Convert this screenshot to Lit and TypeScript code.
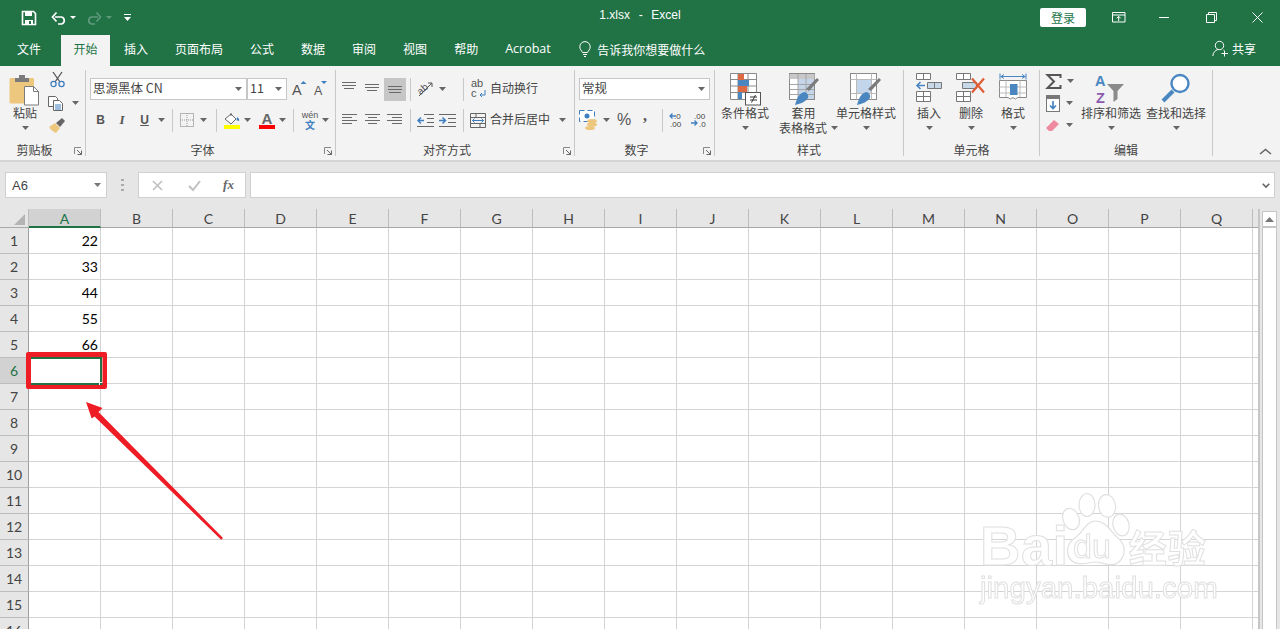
import { LitElement, html, css, svg, TemplateResult } from "lit";
import { customElement } from "lit/decorators.js";

const ic = (w: number, h: number, body: unknown) =>
  html`<svg class="ic" width=${w} height=${h} viewBox="0 0 ${w} ${h}">${body}</svg>`;
const caret = (c = "#666") => ic(7, 4, svg`<path d="M0 0h7L3.5 4z" fill=${c}/>`);
const lines = (rows: number[][], color = "#6a6a6a") =>
  ic(18, 16, svg`<path d=${rows.map(([a, b, y]) => `M${a} ${y}.5H${b}`).join("")} stroke=${color} fill="none"/>`);

const icons: Record<string, TemplateResult> = {
  save: ic(16, 16, svg`<path d="M1.5 1.5h11l2 2v11h-13z" fill="none" stroke="#fff" stroke-width="1.6"/><path d="M4 2h7v4H4zM4 10h8v5H4z" fill="#fff"/><path d="M8 11h2v3H8z" fill="#217346"/>`),
  undo: ic(16, 14, svg`<path d="M4 6h6.5a3.6 3.6 0 0 1 0 7H7" fill="none" stroke="#fff" stroke-width="1.7"/><path d="M5.5 1.5L1.5 6l4 4.5" fill="none" stroke="#fff" stroke-width="1.7"/>`),
  redo: ic(16, 14, svg`<path d="M12 6H5.5a3.6 3.6 0 0 0 0 7H9" fill="none" stroke="#5f9a7d" stroke-width="1.7"/><path d="M10.5 1.5l4 4.5-4 4.5" fill="none" stroke="#5f9a7d" stroke-width="1.7"/>`),
  custom: ic(7, 7, svg`<path d="M0 0h7v1H0zM0 3h7L3.5 7z" fill="#fff"/>`),
  display: ic(14, 11, svg`<path d="M.5.5h12.5v9.5H.5zM.5 3h12.5" fill="none" stroke="#fff"/><path d="M6.7 9V4.5M4.7 6.3l2-2 2 2" fill="none" stroke="#fff"/>`),
  min: ic(11, 11, svg`<path d="M0 5.5h10" stroke="#fff"/>`),
  restore: ic(11, 11, svg`<path d="M.5 2.5h8v8h-8zM2.5 2.5v-2h8v8h-2" fill="none" stroke="#fff"/>`),
  close: ic(11, 11, svg`<path d="M.5.5l10 10M10.5.5l-10 10" stroke="#fff"/>`),
  bulb: ic(12, 16, svg`<path d="M3.5 11.5C2.5 9.5.8 8.4.8 5.8a5.2 5.2 0 0 1 10.4 0c0 2.6-1.7 3.7-2.7 5.7zM4 13.5h4M5 15.5h2" fill="none" stroke="#fff"/>`),
  share: ic(17, 17, svg`<circle cx="7.5" cy="5.5" r="4.2" fill="none" stroke="#fff"/><path d="M.8 16c.3-3.5 2.5-5.8 5-6.4M11 9.8l.6.3" fill="none" stroke="#fff"/><path d="M12.5 10.5v6M9.5 13.5h6.500" stroke="#fff"/>`),
  paste: ic(30, 32, svg`<path d="M1.500 4h21.500a1.500 1.500 0 0 1 1 1.500v24h-23a1.500 1.500 0 0 1-1.500-1.500V5.500A1.500 1.500 0 0 1 1.500 4z" fill="#eec77f"/><path d="M5 4h14v4H5zM9 1h6v3H9z" fill="#7b7b7b"/><path d="M14.500 12.500h9l5 5v13.500h-14z" fill="#fff" stroke="#7b7b7b"/><path d="M23.500 12.500v5h5" fill="none" stroke="#7b7b7b"/>`),
  cut: ic(15, 17, svg`<path d="M3 1l7 10M12 1L5 11" stroke="#555" stroke-width="1.300" fill="none"/><circle cx="3.500" cy="13" r="2.600" fill="none" stroke="#3f7fc0" stroke-width="1.300"/><circle cx="11.500" cy="13" r="2.600" fill="none" stroke="#3f7fc0" stroke-width="1.300"/>`),
  copy: ic(16, 15, svg`<path d="M.5.5h7l2 2v8h-9z" fill="#fff" stroke="#666"/><path d="M5.500 4.500h6l3 3v7h-9z" fill="#fff" stroke="#666"/><path d="M7 9h6M7 11h6M7 13h6" stroke="#3f7fc0"/>`),
  painter: ic(16, 15, svg`<path d="M0 9l6-4 5 5-4 5c-2-.4-5-3-7-6z" fill="#eec77f"/><path d="M7 5l6-5 3 3-5 6z" fill="#666"/>`),
  B: html`<span class="fs b">B</span>`,
  I: html`<span class="fs i">I</span>`,
  U: html`<span class="fs u">U</span>`,
  border: ic(14, 14, svg`<rect x=".5" y=".5" width="13" height="13" fill="none" stroke="#777" stroke-dasharray="1 1"/><path d="M7 0v14M0 7h14" stroke="#999" stroke-dasharray="1 1"/>`),
  fill: ic(18, 18, svg`<path d="M2 8l6-5 5 5-5 5z" fill="#fff" stroke="#666"/><path d="M8 2v3" stroke="#666"/><path d="M14 6c2 1 2.500 3 2 4l-2.500-.8z" fill="#3f7fc0"/><rect x="1" y="14" width="16" height="4" fill="#ffff00"/>`),
  color: ic(16, 18, svg`<text x="8" y="12.500" text-anchor="middle" font-family="Liberation Sans" font-size="15" font-weight="700" fill="#666">A</text><rect y="14" width="16" height="4" fill="#f00"/>`),
  wen: html`<span class="wen"><span>wén</span><b>文</b></span>`,
  grow: ic(20, 18, svg`<text x="3" y="15" font-family="Liberation Sans" font-size="14.500" fill="#555">A</text><path d="M11.500 4h6l-3-3z" fill="#3f7fc0"/>`),
  shrink: ic(16, 18, svg`<text x="1" y="15" font-family="Liberation Sans" font-size="12.500" fill="#555">A</text><path d="M8 1h6l-3 3z" fill="#3f7fc0"/>`),
  aTop: lines([[0, 14, 1], [0, 14, 4], [2, 12, 7]]),
  aMid: lines([[1, 15, 3], [1, 15, 6], [3, 13, 9]]),
  aBot: lines([[2, 16, 5], [2, 16, 8], [3, 15, 11]]),
  orient: ic(20, 18, svg`<text transform="rotate(-42 8 9)" x="2" y="12" font-family="Liberation Sans" font-size="10" fill="#555">ab</text><path d="M4 16L17 3M13 3h4v4" stroke="#555" fill="none"/>`),
  wrap: ic(15, 22, svg`<text x="0" y="9" font-family="Liberation Sans" font-size="11" fill="#555">ab</text><text x="0" y="19" font-family="Liberation Sans" font-size="11" fill="#555">c</text><path d="M14 12v5H9M11 15l-2 2 2 2" stroke="#3f7fc0" fill="none"/>`),
  left: lines([[0, 15, 2], [0, 10, 5], [0, 15, 8], [0, 10, 11]]),
  center: lines([[1, 16, 2], [4, 13, 5], [1, 16, 8], [4, 13, 11]]),
  right: lines([[1, 16, 2], [6, 16, 5], [1, 16, 8], [6, 16, 11]]),
  indentL: ic(17, 13, svg`<path d="M7 .5h10M10 4.500h7M10 8.500h7M0 12.500h17" stroke="#666"/><path d="M7 6.500H1M4 3.500l-3 3 3 3" stroke="#3f7fc0" stroke-width="1.500" fill="none"/>`),
  indentR: ic(17, 13, svg`<path d="M0 .5h17M9 4.500h8M9 8.500h8M0 12.500h17" stroke="#666"/><path d="M0 6.500h6M3.500 3.500l3 3-3 3" stroke="#3f7fc0" stroke-width="1.500" fill="none"/>`),
  merge: ic(16, 15, svg`<path d="M.5.5h15v14H.5zM.5 4.500h15M.5 10.500h15M6 .5v4M10 10.500v4" fill="none" stroke="#666"/><path d="M2.500 7.500h11" stroke="#3f7fc0"/><path d="M4.500 5.500l-2 2 2 2M11.500 5.500l2 2-2 2" stroke="#3f7fc0" fill="none"/>`),
  currency: ic(20, 20, svg`<rect x=".5" y=".5" width="15" height="11" fill="#fff" stroke="#3f7fc0" stroke-dasharray="5 3"/><circle cx="8" cy="6" r="2.500" fill="#3f7fc0"/><ellipse cx="13" cy="11" rx="5" ry="2" fill="#eec77f"/><ellipse cx="13" cy="14.500" rx="5" ry="2" fill="#eec77f"/><ellipse cx="11" cy="18" rx="5" ry="2" fill="#eec77f"/>`),
  pct: html`<span class="pct">%</span>`,
  comma: html`<span class="comma">,</span>`,
  decL: ic(16, 16, svg`<text x="5" y="7" font-family="Liberation Sans" font-size="8" fill="#444">.0</text><text x="1" y="14.500" font-family="Liberation Sans" font-size="8" fill="#444">.00</text><path d="M7 4H1M3.500 1.500L1 4l2.500 2.500" stroke="#3f7fc0" stroke-width="1.300" fill="none"/>`),
  decR: ic(16, 16, svg`<text x="4" y="7" font-family="Liberation Sans" font-size="8" fill="#444">.00</text><text x="9" y="14.500" font-family="Liberation Sans" font-size="8" fill="#444">.0</text><path d="M1 11h6M4.500 8.500L7 11l-2.500 2.500" stroke="#3f7fc0" stroke-width="1.300" fill="none"/>`),
  cond: ic(31, 33, svg`<path d="M.5.5h26v26H.5zM.5 6.500h26M.5 13h26M.5 19.500h26M8 .5v26M18 .5v26" fill="#fff" stroke="#8a8a8a"/><path d="M8 1h6v6H8z" fill="#de6a43"/><path d="M8 7h11v6H8z" fill="#4a86c0"/><path d="M8 13h9v6H8z" fill="#de6a43"/><path d="M8 19h4v7H8z" fill="#4a86c0"/><rect x="15.500" y="19.500" width="15" height="12.500" fill="#fff" stroke="#555"/><path d="M20 24h7M20 27h7M25.500 22l-4 7.500" stroke="#333" fill="none"/>`),
  table: ic(30, 33, svg`<rect x=".5" y=".5" width="25" height="26" fill="#fff" stroke="#8a8a8a"/><path d="M.5 1h25v5H.5z" fill="#c8c8c8"/><path d="M9 6h16v20H9z" fill="#c5d6ea"/><path d="M1 11.500h24M1 16.500h24M1 21.500h24M9 1v25M17 1v25" stroke="#a5a5a5"/><path d="M17 16L28 5l2 2-10 11z" fill="#7b7b7b"/><path d="M6 32c2-6 3-11 9-13 3 .5 5 3 4 6-3 4-8 6-13 7z" fill="#4a86c0"/>`),
  cellStyle: ic(32, 33, svg`<rect x=".5" y=".5" width="26" height="26" fill="#fff" stroke="#8a8a8a"/><path d="M.5 6.500h26M.5 20.500h26M6.500.5v26M21.500.5v26" stroke="#bbb"/><path d="M7 7h14v13H7z" fill="#c2d5ea"/><path d="M18 16L29 5l2 2-10 11z" fill="#7b7b7b"/><path d="M7 32c2-6 3-11 9-13 3 .5 5 3 4 6-3 4-8 6-13 7z" fill="#4a86c0"/>`),
  insert: ic(26, 30, svg`<path d="M.5.5h14v6H.5zM7.500.5v6M.5 18.500h14v10H.5zM.5 23.500h14M7.500 18.500v10" fill="#fff" stroke="#777"/><path d="M11.500 9.500h14v6h-14zM18.500 9.500v6" fill="#c8d8e8" stroke="#777"/><path d="M9 12.500H1M4.500 9L1 12.500 4.500 16" stroke="#4a86c0" stroke-width="1.600" fill="none"/>`),
  del: ic(30, 30, svg`<path d="M.5.5h14v6H.5zM7.500.5v6M.5 18.500h14v10H.5zM.5 23.500h14M7.500 18.500v10" fill="#fff" stroke="#777"/><path d="M6.500 9.500h14v6h-14z" fill="#c8d8e8" stroke="#777"/><path d="M16 5.500l12 14M28 5.500l-12 14" stroke="#de5c36" stroke-width="2.200" fill="none"/>`),
  format: ic(28, 32, svg`<path d="M1 .5v6M27 .5v6M1.500 3.500h25M5 1.500l-3 2 3 2M23 1.500l3 2-3 2" stroke="#4a86c0" fill="none"/><path d="M.5 7.500h27v17h-9q-2 3-4.500 0-3 3-5 0H.5z" fill="#fff" stroke="#8a8a8a"/><path d="M.5 14h27M.5 20h27M7 7.500V24M21 7.500V24" stroke="#bbb"/><path d="M11 11h7.500v11H11z" fill="#4a86c0"/>`),
  sigma: ic(15, 15, svg`<path d="M14.500 4V1H1.500l6.500 6.500L1.500 14H14.500V11" fill="none" stroke="#555" stroke-width="2"/>`),
  down: ic(14, 17, svg`<rect x=".5" y=".5" width="13" height="16" fill="#fff" stroke="#777"/><path d="M1 1h12v3H1z" fill="#777"/><path d="M7 6v8M4 10.500l3 3 3-3" stroke="#3f7fc0" stroke-width="1.600" fill="none"/>`),
  eraser: ic(14, 13, svg`<path d="M0 9l8-8 5 4-7 7H3z" fill="#ee8aa0"/>`),
  sort: ic(32, 30, svg`<text x="0" y="12" font-family="Liberation Sans" font-weight="700" font-size="14.500" fill="#4a86c0">A</text><text x="1" y="29" font-family="Liberation Sans" font-weight="700" font-size="14.500" fill="#8a5bb0">Z</text><path d="M12 10h17l-6.500 7v8l-4 3V17z" fill="#8a8a8a"/>`),
  find: ic(30, 30, svg`<circle cx="19" cy="10.500" r="8.500" fill="#fff" stroke="#4a86c0" stroke-width="2.400"/><path d="M12 18L2 28" stroke="#4a86c0" stroke-width="4"/>`),
};

const launcher = ic(8, 8, svg`<path d="M.5 7V.5H7" fill="none" stroke="#888"/><path d="M3 3l4.500 4.500M7.500 3.500v4h-4" fill="none" stroke="#666"/>`);

const S = (w: number, c: unknown = "") => html`<span class="s" style="width:${w}px">${c}</span>`;
const sep = (w: number) => html`<span class="s" style="width:${w}px"><i class="vs"></i></span>`;
const big = (w: number, icon: TemplateResult, lines: unknown[], top = 0) => html`
  <div class="big" style="width:${w}px">
    <div class="bi" style="padding-top:${top}px">${icon}</div>
    ${lines.map((l) => html`<div class="bl">${l}</div>`)}
  </div>`;
const group = (w: number, label: string, body: unknown, launch = false) => html`
  <section class="grp" style="width:${w}px">
    <div class="body">${body}</div>
    <div class="lab"><span></span><span class=${launch ? "shift" : ""}>${label}</span>${launch ? html`<span class="ln">${launcher}</span>` : html`<span></span>`}</div>
  </section>`;

const COLS = "ABCDEFGHIJKLMNOPQ".split("");
const VALUES: Record<number, number> = { 1: 22, 2: 33, 3: 44, 4: 55, 5: 66 };
const TABS = ["文件", "开始", "插入", "页面布局", "公式", "数据", "审阅", "视图", "帮助", "Acrobat"];

@customElement("app-root")
export class AppRoot extends LitElement {
  static styles = css`
    :host { display: block; width: 1280px; height: 629px; overflow: hidden; position: relative; background: #fff;
      font-family: "Noto Sans CJK SC", "Noto Sans", sans-serif; font-size: 12px; color: #444; }
    .ic { display: block; flex: none; overflow: visible; }
    .s { display: flex; align-items: center; justify-content: center; flex: none; height: 100%; }
    .title { height: 35px; background: #217346; display: flex; align-items: center; color: #fff; position: relative; }
    .qat { display: flex; align-items: center; height: 100%; padding-left: 21px; }
    .doc { position: absolute; left: 0; right: 0; top: 6px; line-height: 18px; text-align: center; font-family: "Liberation Sans", sans-serif; font-size: 12px; white-space: pre; word-spacing: 1px; }
    .win { margin-left: auto; display: flex; align-items: center; height: 100%; }
    .login { width: 46px; height: 19px; background: #fff; color: #217346; border-radius: 2px; text-align: center; line-height: 19px; margin-right: 10px; font-size: 12px; }
    .tabs { height: 31px; background: #217346; display: flex; color: #fff; padding-left: 4.5px; }
    .tab { padding: 0 12.5px; margin-right: 2px; line-height: 27px; white-space: nowrap; }
    .tab.first { margin-right: 7.5px; }
    .tab.on { background: #f3f3f3; color: #217346; margin-right: 1.5px; }
    .tab.ac { font-family: "Open Sans", sans-serif; font-size: 12.5px; }
    .tell { display: flex; align-items: center; gap: 6px; margin-left: 14px; font-size: 12px; height: 28px; white-space: nowrap; }
    .share { margin-left: auto; display: flex; align-items: center; gap: 3px; padding-right: 24px; height: 27px; }
    .ribbon { height: 96px; box-sizing: border-box; background: #f3f3f3; border-bottom: 2px solid #d5d5d5; display: flex; padding-top: 4px; position: relative; }
    .grp { height: 86px; box-sizing: border-box; border-right: 1px solid #c8c8c8; display: flex; flex-direction: column; flex: none; }
    .body { height: 74px; display: flex; box-sizing: border-box; }
    .lab { height: 12px; line-height: 12px; display: grid; grid-template-columns: 1fr auto 1fr; color: #444; white-space: nowrap; }
    .shift { margin-right: 16px; }
    .ln { justify-self: end; padding: 3px 3px 0 0; }
    .col2 { display: flex; flex-direction: column; gap: 7px; padding-top: 7px; }
    .row { display: flex; height: 24px; align-items: center; white-space: nowrap; }
    .txt { padding-bottom: 2px; line-height: 18px; }
    .vs { display: block; width: 1px; height: 23px; background: #c8c8c8; }
    .combo { height: 22px; box-sizing: border-box; background: #fff; border: 1px solid #c6c6c6; display: flex; align-items: center; justify-content: space-between; padding: 0 4px 0 2px; flex: none; line-height: 18px; }
    .combo span { padding-bottom: 2px; }
    .big { display: flex; flex-direction: column; align-items: center; flex: none; padding-top: 3px; }
    .bi { height: 32px; box-sizing: border-box; }
    .bl { height: 15px; line-height: 15px; display: flex; align-items: center; gap: 4px; white-space: nowrap; }
    .stack { width: 39px; flex: none; box-sizing: border-box; }
    .stack .row { height: 22px; justify-content: flex-start; padding-left: 6px; gap: 6px; }
    .stack .r-cut { height: 18px; padding-left: 6px; }
    .stack .r-copy { margin-top: 4px; padding-left: 4px; gap: 8px; }
    .stack .r-paint { padding-left: 5px; }
    .fs { font: 700 12px "Liberation Serif", serif; color: #555; }
    .b { font-family: "Liberation Sans", sans-serif; font-size: 12px; }
    .i { font-style: italic; font-size: 13px; }
    .u { font-family: "Liberation Sans", sans-serif; text-decoration: underline; }
    .wen { display: flex; flex-direction: column; align-items: center; font: 9px/9px "Liberation Sans", sans-serif; color: #555; }
    .wen b { color: #3f7fc0; font: 700 10px/10px "Noto Sans CJK SC", sans-serif; }
    .pct { font: 16px "Liberation Sans", sans-serif; color: #555; }
    .comma { font: 700 16px/16px "Liberation Serif", serif; color: #555; margin-top: -8px; }
    .on-bg { background: #c6c6c6; height: 23px; }
    .fontname { font-size: 12.5px; }
    .fx { height: 47px; background: #e6e6e6; display: flex; align-items: flex-start; padding: 10px 0 0 5px; box-sizing: border-box; }
    .box { height: 26px; box-sizing: border-box; background: #fff; border: 1px solid #d0d0d0; display: flex; align-items: center; flex: none; }
    .name { width: 102px; padding: 0 5px 0 6px; justify-content: space-between; font: 13px "Liberation Sans", sans-serif; color: #444; }
    .dots { width: 31px; display: flex; justify-content: center; height: 26px; align-items: center; }
    .fxbtn { width: 108px; }
    .input { width: 1025px; margin-left: 4px; justify-content: flex-end; padding-right: 4px; }
    .sheetwrap { display: flex; height: 420px; overflow: hidden; background: #e6e6e6; }
    .sheet { display: grid; grid-template-columns: 29px repeat(17, 72px) 5px; grid-template-rows: 19px repeat(16, 26px); width: 1260px; box-sizing: border-box; border-right: 2px solid #c6c6c6; font-family: Lato, sans-serif; font-size: 14px; color: #000; background: #fff; flex: none; }
    .ch { background: #e6e6e6; border-right: 1px solid #bdbdbd; border-bottom: 1px solid #a8a8a8; text-align: center; line-height: 20px; font-size: 14px; color: #444; box-sizing: border-box; }
    .ch.on { background: #d2d2d2; border-bottom: 2px solid #217346; color: #217346; }
    .ch.end { border-right: 0; }
    .corner { background: #e6e6e6; border-right: 1px solid #bdbdbd; border-bottom: 1px solid #a8a8a8; box-sizing: border-box; display: flex; justify-content: flex-end; align-items: flex-end; padding: 0 3px 2px 0; }
    .rh { background: #e6e6e6; border-right: 1px solid #9f9f9f; border-bottom: 1px solid #bdbdbd; text-align: center; line-height: 25px; font-size: 14px; color: #444; box-sizing: border-box; }
    .rh.on { background: #d2d2d2; color: #217346; }
    .c { border-right: 1px solid #d4d4d4; border-bottom: 1px solid #d4d4d4; box-sizing: border-box; text-align: right; padding-right: 2px; line-height: 25px; }
    .c.end { border-right: 0; padding: 0; }
    .c.sel { outline: 2px solid #217346; outline-offset: -1px; position: relative; }
    .handle { position: absolute; right: -3px; bottom: -3px; width: 3px; height: 3px; background: #217346; border: solid #fff; border-width: 1px 0 0 1px; }
    .scroll { margin-left: 2px; width: 15px; flex: none; background: #fff; border: 1px solid #c6c6c6; box-sizing: border-box; margin-top: 2px; border-bottom: 0; }
    .up { height: 14px; border-bottom: 2px solid #c6c6c6; display: flex; align-items: center; justify-content: center; }
    .note { position: absolute; left: 0; top: 0; pointer-events: none; }
    .wm { position: absolute; left: 980px; top: 490px; width: 240px; height: 115px; color: #fff; -webkit-text-stroke: 1px #e0e0e0; pointer-events: none; font-family: "Liberation Sans", sans-serif; font-weight: 700; filter: blur(.3px); }
    .wm-top { display: flex; align-items: flex-end; height: 78px; }
    .wm-bai { font-size: 56px; line-height: 44px; letter-spacing: .5px; }
    .wm-jy { font-size: 38px; line-height: 44px; margin-left: 60px; font-family: "Noto Sans CJK SC", sans-serif; letter-spacing: 1px; }
    .wm-url { font-size: 29.5px; line-height: 30px; font-weight: 400; margin-top: 5px; white-space: nowrap; }
    .paw { position: absolute; left: 79px; top: 1px; }
    .du { font: 400 34px "Liberation Sans", sans-serif; }
  `;

  private titleBar() {
    return html`<div class="title">
      <div class="qat">
        ${icons.save}${S(14)}${icons.undo}${S(3)}${ic(6, 3, svg`<path d="M0 0h6L3 3z" fill="#fff"/>`)}${S(10)}${icons.redo}
        ${S(4)}${ic(6, 3, svg`<path d="M0 0h6L3 3z" fill="#5f9a7d"/>`)}${S(12)}${icons.custom}
      </div>
      <div class="doc">1.xlsx  -  Excel</div>
      <div class="win">
        <div class="login">登录</div>
        ${S(45, icons.display)}${S(47, icons.min)}${S(46, icons.restore)}${S(46, icons.close)}
      </div>
    </div>`;
  }

  private tabs() {
    return html`<div class="tabs">
      ${TABS.map((t, i) => html`<div class="tab ${i === 0 ? "first" : ""} ${i === 1 ? "on" : ""} ${t === "Acrobat" ? "ac" : ""}">${t}</div>`)}
      <div class="tell">${icons.bulb}<span>告诉我你想要做什么</span></div>
      <div class="share">${icons.share}<span>共享</span></div>
    </div>`;
  }

  private ribbon() {
    return html`<div class="ribbon">
      ${group(86, "剪贴板", html`
        <div style="width:6px"></div>
        ${big(38, icons.paste, ["粘贴", caret()], 1)}
        <div class="stack">
          <div class="row r-cut">${icons.cut}</div>
          <div class="row r-copy">${icons.copy}${caret()}</div>
          <div class="row r-paint">${icons.painter}</div>
        </div>`, true)}
      ${group(250, "字体", html`
        <div class="col2" style="padding-left:4px">
          <div class="row">
            <div class="combo" style="width:157px"><span class="fontname">思源黑体 CN</span>${caret()}</div>
            <div class="combo" style="width:40px"><span class="fontname">11</span>${caret()}</div>
            ${S(23, icons.grow)}${S(22, icons.shrink)}
          </div>
          <div class="row">
            ${S(21, icons.B)}${S(22, icons.I)}${S(23, icons.U)}${S(11, caret())}${sep(10)}
            ${S(20, icons.border)}${S(13, caret())}${sep(12)}${S(20, icons.fill)}${S(10, caret())}
            ${S(5)}${S(20, icons.color)}${S(11, caret())}${sep(11)}${S(22, icons.wen)}${S(9, caret())}
          </div>
        </div>`, true)}
      ${group(239, "对齐方式", html`
        <div class="col2" style="padding-left:4px">
          <div class="row">
            ${S(22, icons.aTop)}${S(22, icons.aMid)}
            <span class="s on-bg" style="width:22px">${icons.aBot}</span>${sep(8)}
            ${S(22, icons.orient)}${S(12, caret())}${S(10)}${sep(10)}${S(20, icons.wrap)}${S(2)}<span class="txt">自动换行</span>
          </div>
          <div class="row">
            ${S(22, icons.left)}${S(22, icons.center)}${S(22, icons.right)}${sep(8)}
            ${S(22, icons.indentL)}${S(22, icons.indentR)}${sep(10)}${S(20, icons.merge)}${S(2)}<span class="txt">合并后居中</span>${S(24, caret())}
          </div>
        </div>`, true)}
      ${group(140, "数字", html`
        <div class="col2" style="padding-left:4px">
          <div class="row"><div class="combo" style="width:131px"><span class="fontname">常规</span>${caret()}</div></div>
          <div class="row">
            ${S(20, icons.currency)}${S(14, caret())}${S(22, icons.pct)}${S(20, icons.comma)}${sep(14)}${S(16, icons.decL)}${S(5)}${S(16, icons.decR)}
          </div>
        </div>`, true)}
      ${group(189, "样式", html`
        ${big(60, icons.cond, ["条件格式", caret()], 0)}
        ${big(57, icons.table, ["套用", html`<span style="margin-left:10px">表格格式</span>${caret()}`], 0)}
        ${big(68, icons.cellStyle, ["单元格样式", caret()], 0)}
      `)}
      ${group(136, "单元格", html`
        <div style="width:4px"></div>
        ${big(42, icons.insert, ["插入", caret()], 0)}
        ${big(42, icons.del, ["删除", caret()], 0)}
        ${big(42, icons.format, ["格式", caret()], 0)}
      `)}
      ${group(173, "编辑", html`
        <div class="stack">
          <div class="row">${icons.sigma}${caret()}</div>
          <div class="row">${icons.down}${caret()}</div>
          <div class="row">${icons.eraser}${caret()}</div>
        </div>
        <div style="width:1px"></div>
        ${big(62, icons.sort, ["排序和筛选", caret()], 1)}
        ${big(68, icons.find, ["查找和选择", caret()], 0)}
      `)}
      <div style="margin:78px 0 0 46px">${ic(13, 7, svg`<path d="M1 6l5.500-4.500L12 6" fill="none" stroke="#666" stroke-width="1.600"/>`)}</div>
    </div>`;
  }

  private formula() {
    return html`<div class="fx">
      <div class="box name"><span>A6</span>${caret("#777")}</div>
      <div class="dots">${ic(3, 12, svg`<path d="M0 0h3v2H0zM0 5h3v2H0zM0 10h3v2H0z" fill="#aaa"/>`)}</div>
      <div class="box fxbtn">
        ${S(37, ic(11, 11, svg`<path d="M1 1l9 9M10 1l-9 9" stroke="#c0c0c0" stroke-width="1.600"/>`))}
        ${S(36, ic(13, 11, svg`<path d="M1 6l4 4 7-9" stroke="#c0c0c0" stroke-width="2" fill="none"/>`))}
        ${S(33, html`<span style="font:italic 700 13px 'Liberation Serif',serif;color:#666">fx</span>`)}
      </div>
      <div class="box input">${ic(8, 5, svg`<path d="M.7.7L4 4 7.300.7" fill="none" stroke="#666" stroke-width="1.600"/>`)}</div>
    </div>`;
  }

  private sheet() {
    const rows = Array.from({ length: 16 }, (_, i) => i + 1);
    return html`<div class="sheetwrap">
      <div class="sheet">
        <div class="corner">${ic(11, 11, svg`<path d="M11 0v11H0z" fill="#b4b4b4"/>`)}</div>
        ${COLS.map((c) => html`<div class="ch ${c === "A" ? "on" : ""}">${c}</div>`)}
        <div class="ch end"></div>
        ${rows.map((r) => html`
          <div class="rh ${r === 6 ? "on" : ""}">${r}</div>
          ${COLS.map((c) => {
            const sel = c === "A" && r === 6;
            return html`<div class="c ${sel ? "sel" : ""}">${c === "A" ? VALUES[r] ?? "" : ""}${sel ? html`<div class="handle"></div>` : ""}</div>`;
          })}
          <div class="c end"></div>`)}
      </div>
      <div class="scroll"><div class="up">${ic(9, 5, svg`<path d="M0 5h9L4.500 0z" fill="#777"/>`)}</div></div>
    </div>`;
  }

  render() {
    return html`
      ${this.titleBar()}${this.tabs()}${this.ribbon()}${this.formula()}${this.sheet()}
      <div class="wm">
        <svg class="paw" width="72" height="78" viewBox="0 0 72 78">
          <g fill="#fff" stroke="#e0e0e0" stroke-width="1.200">
            <ellipse cx="12" cy="28" rx="8" ry="11" transform="rotate(-20 12 28)"/>
            <ellipse cx="28" cy="14" rx="8" ry="11.500"/>
            <ellipse cx="48" cy="15" rx="8.500" ry="11.500" transform="rotate(-8 48 15)"/>
            <ellipse cx="62" cy="34" rx="8" ry="11" transform="rotate(-15 62 34)"/>
            <path d="M36 30C27 30 24 42 16 47 8 52 6 62 12 69c7 7 18 2 24 2 8 0 16 6 24 0 8-8 6-18-1-24-7-5-11-17-23-17z"/>
          </g>
          <text class="du" x="14" y="67" fill="#fff" stroke="#e0e0e0">du</text>
        </svg>
        <div class="wm-top"><span class="wm-bai">Bai</span><span class="wm-jy">经验</span></div>
        <div class="wm-url">jingyan.baidu.com</div>
      </div>
      <svg class="note" width="1280" height="629" viewBox="0 0 1280 629">
        <path fill-rule="evenodd" d="M28 352h77a2 2 0 0 1 2 2v33a2 2 0 0 1-2 2H28a2 2 0 0 1-2-2v-33a2 2 0 0 1 2-2zM31 357v28h71.500v-28z" fill="#ee1c25"/>
        <path d="M86 402l16.500 6-4 4L223 538l-1.800 1.800L94.500 416.500l-2.800 2z" fill="#ee1c25"/>
      </svg>
    `;
  }
}
